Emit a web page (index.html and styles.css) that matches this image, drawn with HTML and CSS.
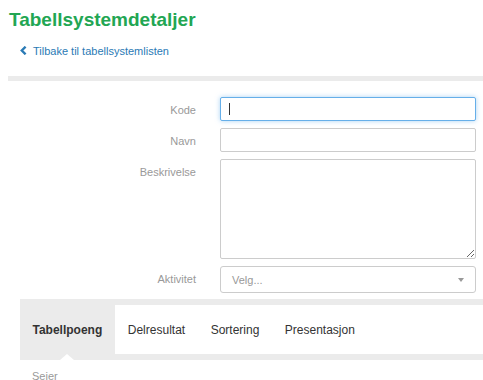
FILE: index.html
```html
<!DOCTYPE html>
<html lang="no">
<head>
<meta charset="utf-8">
<title>Tabellsystemdetaljer</title>
<link rel="stylesheet" href="styles.css">
</head>
<body>
<div class="page">
  <h1 class="title">Tabellsystemdetaljer</h1>
  <a class="back" href="#"><svg class="chev" width="7" height="9" viewBox="0 0 7 9"><polyline points="5.6,0.7 1.8,4.5 5.6,8.3" fill="none" stroke="#2a7ab5" stroke-width="2.4"/></svg>Tilbake til tabellsystemlisten</a>
  <div class="bar"></div>
  <div class="form">
    <div class="label">Kode</div>
    <div class="control input focus"><span class="cursor"></span></div>
    <div class="label">Navn</div>
    <div class="control input"></div>
    <div class="label">Beskrivelse</div>
    <textarea class="control textarea"></textarea>
    <div class="label">Aktivitet</div>
    <div class="control select"><span class="placeholder">Velg...</span><span class="arrow"></span></div>
  </div>
  <div class="tabs-wrap">
    <div class="tabs">
      <div class="tab active">Tabellpoeng</div>
      <div class="tab">Delresultat</div>
      <div class="tab">Sortering</div>
      <div class="tab">Presentasjon</div>
    </div>
    <div class="tabs-bottom"><span class="notch"></span></div>
    <div class="sub-label">Seier</div>
  </div>
</div>
</body>
</html>
```
FILE: styles.css
```css
html, body {
  margin: 0;
  padding: 0;
  background: #fff;
  font-family: "Liberation Sans", Arial, sans-serif;
  overflow: hidden;
}
.page {
  padding-left: 8px;
}
.title {
  margin: 9px 0 0 1px;
  font-size: 19px;
  line-height: 22px;
  font-weight: bold;
  color: #22a653;
}
.back {
  display: flex;
  align-items: center;
  margin: 13px 0 0 12px;
  font-size: 11px;
  line-height: 14px;
  color: #2a7ab5;
  text-decoration: none;
}
.chev {
  margin-right: 6px;
  margin-top: -1px;
}
.bar {
  margin-top: 18px;
  height: 5px;
  background: #ebebeb;
}
.form {
  display: grid;
  grid-template-columns: 188px 256px;
  column-gap: 24px;
  row-gap: 7px;
  margin-top: 16px;
}
.label {
  text-align: right;
  font-size: 11px;
  line-height: 14px;
  padding-top: 6px;
  color: #999;
}
.control {
  box-sizing: border-box;
  width: 256px;
  border: 1px solid #ccc;
  border-radius: 2px;
  background: #fff;
  margin: 0;
}
.input {
  height: 24px;
  display: flex;
  align-items: center;
  padding-left: 8px;
}
.focus {
  border-color: #66afe9;
  box-shadow: 0 0 5px rgba(102, 175, 233, 0.55);
}
.cursor {
  display: block;
  width: 1px;
  height: 12px;
  background: #333;
}
.textarea {
  height: 100px;
  resize: vertical;
  display: block;
  font-family: inherit;
  padding: 4px 8px;
}
.select {
  height: 27px;
  display: flex;
  align-items: center;
  justify-content: space-between;
  padding: 0 11px;
  border-radius: 3px;
}
.placeholder {
  font-size: 11px;
  color: #999;
}
.arrow {
  width: 0;
  height: 0;
  border-style: solid;
  border-width: 4px 3px 0 3px;
  border-color: #999 transparent transparent transparent;
}
.tabs-wrap {
  margin: 6px 0 0 12px;
}
.tabs {
  display: flex;
  border-top: 6px solid #ebebeb;
  height: 49px;
}
.tab {
  display: flex;
  align-items: center;
  padding: 0 13px 0 12.5px;
  font-size: 12px;
  color: #333;
}
.tab.active {
  background: #ebebeb;
  font-weight: bold;
}
.tabs-bottom {
  height: 6px;
  background: #ebebeb;
  display: flex;
  padding-left: 40px;
}
.notch {
  width: 0;
  height: 0;
  border-style: solid;
  border-width: 0 7.5px 6px 7.5px;
  border-color: transparent transparent #fff transparent;
}
.sub-label {
  margin: 9px 0 0 12px;
  font-size: 11px;
  line-height: 14px;
  color: #999;
}
```
